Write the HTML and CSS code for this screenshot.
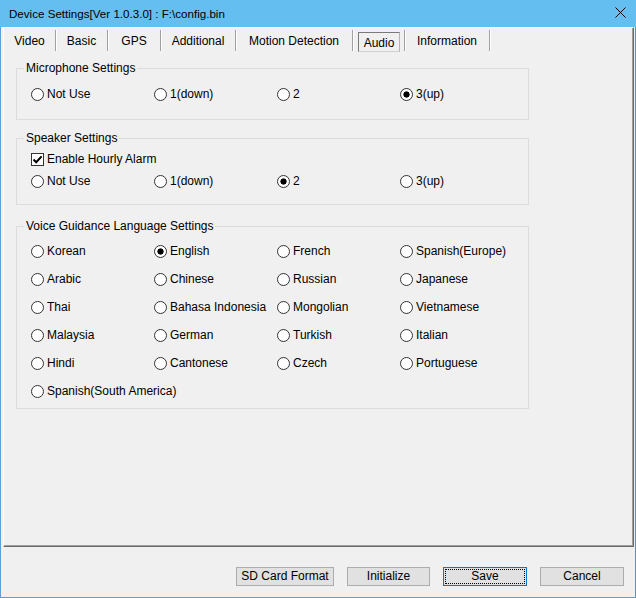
FILE: index.html
```html
<!DOCTYPE html>
<html lang="en">
<head>
    <meta charset="UTF-8">
    <link rel="stylesheet" href="styles.css">
    <title>Device Settings</title>
</head>
<body>
    <div class="window">
        <div class="titlebar">
            <span class="title">Device Settings[Ver 1.0.3.0] : F:\config.bin</span>
            <svg class="close" width="11" height="11" viewBox="0 0 11 11"><path d="M0.5 0.5L10.5 10.5M10.5 0.5L0.5 10.5" stroke="#000" stroke-width="1"/></svg>
        </div>
        <div class="tabctl">
            <div class="tabs">
                <div class="tab t_video">Video</div>
                <div class="tab t_basic">Basic</div>
                <div class="tab t_gps">GPS</div>
                <div class="tab t_add">Additional</div>
                <div class="tab t_motion">Motion Detection</div>
                <div class="tab t_audio"><span class="sel_box">Audio</span></div>
                <div class="tab t_info">Information</div>
            </div>
            <div class="page">
                <div class="group mic">
                    <div class="legend">Microphone Settings</div>
                    <div class="opts">
                        <label class="opt"><span class="radio"></span>Not Use</label>
                        <label class="opt"><span class="radio"></span>1(down)</label>
                        <label class="opt"><span class="radio"></span>2</label>
                        <label class="opt"><span class="radio on"></span>3(up)</label>
                    </div>
                </div>
                <div class="group speaker">
                    <div class="legend">Speaker Settings</div>
                    <label class="opt check_row"><span class="check"><svg width="11" height="11" viewBox="0 0 11 11"><path d="M1.5 5.5L4.2 8.2L9.6 2.4" fill="none" stroke="#000" stroke-width="2"/></svg></span>Enable Hourly Alarm</label>
                    <div class="opts">
                        <label class="opt"><span class="radio"></span>Not Use</label>
                        <label class="opt"><span class="radio"></span>1(down)</label>
                        <label class="opt"><span class="radio on"></span>2</label>
                        <label class="opt"><span class="radio"></span>3(up)</label>
                    </div>
                </div>
                <div class="group voice">
                    <div class="legend">Voice Guidance Language Settings</div>
                    <div class="opts">
                        <label class="opt"><span class="radio"></span>Korean</label>
                        <label class="opt"><span class="radio on"></span>English</label>
                        <label class="opt"><span class="radio"></span>French</label>
                        <label class="opt"><span class="radio"></span>Spanish(Europe)</label>
                        <label class="opt"><span class="radio"></span>Arabic</label>
                        <label class="opt"><span class="radio"></span>Chinese</label>
                        <label class="opt"><span class="radio"></span>Russian</label>
                        <label class="opt"><span class="radio"></span>Japanese</label>
                        <label class="opt"><span class="radio"></span>Thai</label>
                        <label class="opt"><span class="radio"></span>Bahasa Indonesia</label>
                        <label class="opt"><span class="radio"></span>Mongolian</label>
                        <label class="opt"><span class="radio"></span>Vietnamese</label>
                        <label class="opt"><span class="radio"></span>Malaysia</label>
                        <label class="opt"><span class="radio"></span>German</label>
                        <label class="opt"><span class="radio"></span>Turkish</label>
                        <label class="opt"><span class="radio"></span>Italian</label>
                        <label class="opt"><span class="radio"></span>Hindi</label>
                        <label class="opt"><span class="radio"></span>Cantonese</label>
                        <label class="opt"><span class="radio"></span>Czech</label>
                        <label class="opt"><span class="radio"></span>Portuguese</label>
                        <label class="opt"><span class="radio"></span>Spanish(South America)</label>
                    </div>
                </div>
            </div>
        </div>
        <div class="footer">
            <button class="btn b_format">SD Card Format</button>
            <button class="btn b_init">Initialize</button>
            <button class="btn b_save">Save</button>
            <button class="btn b_cancel">Cancel</button>
        </div>
    </div>
</body>
</html>
```

FILE: styles.css
```css
* {
    margin: 0;
    padding: 0;
    box-sizing: border-box;
}
body {
    font-family: "Liberation Sans", Arial, sans-serif;
    font-size: 12px;
    color: #000;
    background-color: #f0f0f0;
}
.window {
    width: 636px;
    height: 598px;
    border: 1px solid #5aa2d6;
    border-top: 0;
    border-right-color: #6a8fae;
    display: flex;
    flex-direction: column;
}
.titlebar {
    height: 27px;
    margin: 0 -1px;
    padding: 0 10px 0 9px;
    background-color: #64bff0;
    display: flex;
    justify-content: space-between;
    align-items: center;
}
.title {
    font-size: 11.6px;
}
.close {
    margin-bottom: 3px;
}
.tabctl {
    height: 520px;
    margin: 0 1px 0 2px;
    border-top: 1px solid #fff;
    border-left: 1px solid #fff;
    border-right: 1px solid #696969;
    border-bottom: 1px solid #696969;
    box-shadow: inset -1px -1px 0 #a0a0a0;
}
.tabs {
    display: flex;
    height: 24px;
}
.tab {
    height: 21px;
    margin-top: 2px;
    padding-top: 2px;
    line-height: 19px;
    text-align: center;
    border-right: 1px solid #a0a0a0;
    box-shadow: 1px 0 0 #fff;
}
.t_video { width: 52px; }
.t_basic { width: 52px; }
.t_gps { width: 53px; }
.t_add { width: 75px; }
.t_motion { width: 117px; }
.t_audio {
    width: 52px;
    padding-top: 0;
}
.t_info { width: 85px; }
.sel_box {
    display: block;
    height: 20px;
    margin: 2px 4px 0 5px;
    padding-top: 1px;
    line-height: 18px;
    border: 1px solid;
    border-color: #7a7a7a #b4b4b4 #d0d0d0 #7a7a7a;
}
.page {
    padding: 16px 0 0 12px;
}
.group {
    width: 513px;
    border: 1px solid #dcdcdc;
}
.speaker {
    margin-top: 18px;
}
.voice {
    margin-top: 21px;
}
.legend {
    width: fit-content;
    height: 13px;
    margin: -7px 0 0 7px;
    padding: 0 2px;
    line-height: 13px;
    background-color: #f0f0f0;
}
.opts {
    display: grid;
    grid-template-columns: repeat(4, 123px);
    grid-auto-rows: 18px;
    padding-left: 14px;
}
.mic .opts {
    margin: 10px 0 16px;
}
.speaker .opts {
    margin: 4px 0 14px;
}
.voice .opts {
    row-gap: 10px;
    margin: 9px 0 8px;
}
.opt {
    display: flex;
    align-items: center;
    gap: 3px;
    height: 18px;
    white-space: nowrap;
}
.check_row {
    margin-top: 5px;
    padding-left: 14px;
}
.radio {
    flex: none;
    width: 13px;
    height: 13px;
    border: 1px solid #333;
    border-radius: 50%;
    background-color: #fff;
}
.radio.on {
    background: radial-gradient(circle, #000 0 2.8px, #fff 3.4px);
}
.check {
    flex: none;
    width: 13px;
    height: 13px;
    border: 1px solid #333;
    background-color: #fff;
    display: flex;
}
.footer {
    flex: 1;
    display: flex;
    justify-content: flex-end;
    align-items: flex-start;
    gap: 13px;
    padding: 20px 11px 0 0;
}
.btn {
    height: 19px;
    border: 1px solid #adadad;
    background-color: #e1e1e1;
    font: inherit;
    line-height: 17px;
    color: #000;
    text-align: center;
}
.b_format { width: 98px; }
.b_init { width: 83px; }
.b_save {
    width: 84px;
    border-color: #0078d7;
    outline: 1px dotted #000;
    outline-offset: -3px;
}
.b_cancel { width: 84px; }
```
